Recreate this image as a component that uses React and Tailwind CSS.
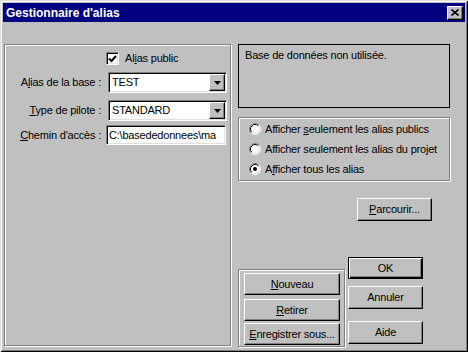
import React from 'react';

const raised =
  'bg-[#c0c0c0] border border-t-white border-l-white border-r-black border-b-black shadow-[inset_-1px_-1px_0_#808080]';
const sunken =
  'border border-t-[#808080] border-l-[#808080] border-r-white border-b-white shadow-[inset_1px_1px_0_#000,inset_-1px_-1px_0_#dfdfdf]';
const etched = 'border border-[#808080] shadow-[inset_1px_1px_0_#fff,1px_1px_0_#fff]';

const Btn = ({ children, className = '' }) => (
  <button className={`flex items-center justify-center text-[11px] tracking-[-0.2px] text-black ${raised} ${className}`}>
    {children}
  </button>
);

const Radio = ({ checked, children }) => (
  <label className="flex items-center gap-[4px] h-[20px]">
    <svg width="12" height="12" viewBox="0 0 12 12">
      <circle cx="6" cy="6" r="5" fill="#fff" />
      <path d="M2.11 9.89 A5.5 5.5 0 0 1 9.89 2.11" fill="none" stroke="#808080" />
      <path d="M9.89 2.11 A5.5 5.5 0 0 1 2.11 9.89" fill="none" stroke="#fff" />
      <path d="M2.82 9.18 A4.5 4.5 0 0 1 9.18 2.82" fill="none" stroke="#000" />
      <path d="M9.18 2.82 A4.5 4.5 0 0 1 2.82 9.18" fill="none" stroke="#dfdfdf" />
      {checked && <circle cx="6" cy="6" r="2" fill="#000" />}
    </svg>
    <span>{children}</span>
  </label>
);

const Combo = ({ value }) => (
  <div className={`flex items-center w-[119px] h-[21px] bg-white ${sunken}`}>
    <span className="flex-1 pl-[3px] text-[11px]">{value}</span>
    <div className={`flex items-center justify-center w-[16px] h-[17px] mr-[1px] ${raised}`}>
      <svg width="7" height="4" viewBox="0 0 7 4">
        <path d="M0 0 H7 L3.5 4 Z" fill="#000" />
      </svg>
    </div>
  </div>
);

export default function App() {
  return (
    <div className="w-[468px] h-[352px] bg-[#c0c0c0] p-[3px] shadow-[inset_1px_1px_0_#dfdfdf,inset_-1px_-1px_0_#000,inset_2px_2px_0_#fff,inset_-2px_-2px_0_#808080] font-['Liberation_Sans',Arial,sans-serif] text-[11px] tracking-[-0.2px] text-black">
      {/* barre de titre */}
      <div className="flex items-center justify-between h-[19px] bg-[#000080] pl-[3px] pr-[2px]">
        <span className="text-white font-bold text-[12px] tracking-normal">Gestionnaire d'alias</span>
        <div className={`flex items-center justify-center w-[16px] h-[14px] ${raised}`}>
          <svg width="8" height="7" viewBox="0 0 8 7">
            <path d="M0.5 0.5 L7.5 6.5 M7.5 0.5 L0.5 6.5" stroke="#000" strokeWidth="1.6" />
          </svg>
        </div>
      </div>

      <div className="flex gap-[7px] mt-[22px] pl-[1px]">
        {/* panneau gauche */}
        <div className={`w-[227px] h-[302px] ${etched} flex flex-col pt-[7px]`}>
          <div className="flex items-center h-[13px] pl-[101px] gap-[4px]">
            <div className={`w-[13px] h-[13px] bg-white flex items-center justify-center ${sunken}`}>
              <svg width="9" height="8" viewBox="0 0 9 8">
                <path d="M1 3.5 L3.5 6 L8 1" fill="none" stroke="#000" strokeWidth="2" />
              </svg>
            </div>
            <span className="ml-[2px]">Al<u>i</u>as public</span>
          </div>

          <div className="flex items-center mt-[7px]">
            <span className="w-[103px] text-right pr-[7px]">A<u>l</u>ias de la base :</span>
            <Combo value="TEST" />
          </div>
          <div className="flex items-center mt-[7px]">
            <span className="w-[103px] text-right pr-[7px]"><u>T</u>ype de pilote :</span>
            <Combo value="STANDARD" />
          </div>
          <div className="flex items-center mt-[4px]">
            <span className="w-[101px] text-right pr-[5px]"><u>C</u>hemin d'accès :</span>
            <div className={`w-[120px] h-[20px] bg-white flex items-center overflow-hidden whitespace-nowrap ${sunken}`}>
              <span className="pl-[2px]">C:\basededonnees\ma</span>
            </div>
          </div>
        </div>

        {/* colonne droite */}
        <div className="w-[212px] flex flex-col">
          <div className="h-[64px] border border-black pl-[6px] pt-[2px]">Base de données non utilisée.</div>

          <div className={`mt-[9px] h-[64px] ${etched} flex flex-col justify-center pl-[10px]`}>
            <Radio>Afficher <u>s</u>eulement les alias publics</Radio>
            <Radio>Afficher seulement les alias du projet</Radio>
            <Radio checked>A<u>f</u>ficher tous les alias</Radio>
          </div>

          <Btn className="mt-[17px] ml-[119px] w-[75px] h-[23px]"><u>P</u>arcourir...</Btn>

          <div className="flex gap-[3px] mt-[36px]">
            <div className={`mt-[12px] w-[107px] h-[78px] ${etched} flex flex-col pl-[5px] pt-[3px]`}>
              <Btn className="w-[96px] h-[22px]"><u>N</u>ouveau</Btn>
              <Btn className="w-[96px] h-[22px] mt-[4px]"><u>R</u>etirer</Btn>
              <Btn className="w-[96px] h-[22px] mt-[2px]"><u>E</u>nregistrer sous...</Btn>
            </div>
            <div className="flex flex-col">
              <button className="flex items-center justify-center w-[75px] h-[22px] bg-[#c0c0c0] border border-black shadow-[inset_1px_1px_0_#fff,inset_-1px_-1px_0_#000,inset_-2px_-2px_0_#808080]">
                OK
              </button>
              <Btn className="w-[75px] h-[23px] mt-[7px]">Annuler</Btn>
              <Btn className="w-[75px] h-[23px] mt-[12px]">Aide</Btn>
            </div>
          </div>
        </div>
      </div>
    </div>
  );
}
